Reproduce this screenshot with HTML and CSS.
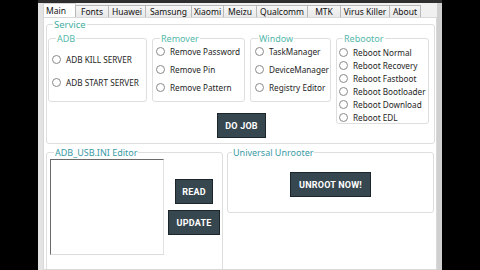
FILE: index.html
```html
<!DOCTYPE html>
<html>
<head>
<meta charset="utf-8">
<link rel="stylesheet" href="styles.css">
</head>
<body>
<div class="win">
  <div class="titlebar"></div>
  <div class="frame">
    <div class="tabs">
      <div class="tab sel w33">Main</div>
      <div class="tab w34">Fonts</div>
      <div class="tab w38">Huawei</div>
      <div class="tab w47">Samsung</div>
      <div class="tab w33">Xiaomi</div>
      <div class="tab w34">Meizu</div>
      <div class="tab w52">Qualcomm</div>
      <div class="tab w34">MTK</div>
      <div class="tab w50">Virus Killer</div>
      <div class="tab w32">About</div>
    </div>
    <div class="page">
      <fieldset class="grp service">
        <legend>Service</legend>
        <div class="svc">
          <div class="svc-left">
            <fieldset class="grp adb">
              <legend>ADB</legend>
              <div class="radios r-adb">
                <label class="radio"><span class="dot"></span>ADB KILL SERVER</label>
                <label class="radio"><span class="dot"></span>ADB START SERVER</label>
              </div>
            </fieldset>
            <fieldset class="grp adb">
              <legend>Remover</legend>
              <div class="radios r-three">
                <label class="radio"><span class="dot"></span>Remove Password</label>
                <label class="radio"><span class="dot"></span>Remove Pin</label>
                <label class="radio"><span class="dot"></span>Remove Pattern</label>
              </div>
            </fieldset>
            <fieldset class="grp adb">
              <legend>Window</legend>
              <div class="radios r-three r-win">
                <label class="radio"><span class="dot"></span>TaskManager</label>
                <label class="radio"><span class="dot"></span>DeviceManager</label>
                <label class="radio"><span class="dot"></span>Registry Editor</label>
              </div>
            </fieldset>
            <button class="btn dojob">DO JOB</button>
          </div>
          <fieldset class="grp reboot">
            <legend>Rebootor</legend>
            <div class="radios r-reboot">
              <label class="radio"><span class="dot"></span>Reboot Normal</label>
              <label class="radio"><span class="dot"></span>Reboot Recovery</label>
              <label class="radio"><span class="dot"></span>Reboot Fastboot</label>
              <label class="radio"><span class="dot"></span>Reboot Bootloader</label>
              <label class="radio"><span class="dot"></span>Reboot Download</label>
              <label class="radio"><span class="dot"></span>Reboot EDL</label>
            </div>
          </fieldset>
        </div>
      </fieldset>
      <div class="bottom">
        <fieldset class="grp editor">
          <legend class="blue">ADB_USB.INI Editor</legend>
          <div class="ed-body">
            <div class="textbox"></div>
            <div class="ed-btns">
              <button class="btn read">READ</button>
              <button class="btn update">UPDATE</button>
            </div>
          </div>
        </fieldset>
        <fieldset class="grp unroot">
          <legend class="blue">Universal Unrooter</legend>
          <div class="un-body">
            <button class="btn unbtn">UNROOT NOW!</button>
          </div>
        </fieldset>
      </div>
    </div>
  </div>
</div>
</body>
</html>
```

FILE: styles.css
```css
* { box-sizing: border-box; }
html, body { margin: 0; padding: 0; }
body {
  background: #000;
  width: 480px;
  height: 270px;
  overflow: hidden;
  font-family: "Noto Sans", "Open Sans", sans-serif;
  color: #222;
}
.win {
  margin-left: 38px;
  width: 404px;
  height: 270px;
  display: flex;
  flex-direction: column;
}
.titlebar {
  height: 3px;
  background: #2e2e2e;
}
.frame {
  flex: 1;
  background: #f0f0f0;
  border-left: 5px solid #e4e4e4;
  border-right: 5px solid #d0d0d0;
  display: flex;
  flex-direction: column;
  min-height: 0;
}
.tabs {
  height: 14px;
  display: flex;
  align-items: flex-end;
}
.tab {
  height: 12px;
  border: 1px solid #b9b9b9;
  border-bottom: none;
  margin-left: -1px;
  background: linear-gradient(#f6f6f6, #e9e9e9);
  font-size: 8.5px;
  line-height: 11px;
  text-align: center;
  white-space: nowrap;
  color: #111;
}
.tab.sel {
  height: 14px;
  margin-left: 0;
  background: #fff;
  border-color: #d6d6d6;
  text-align: left;
  padding-left: 2px;
  line-height: 13px;
}
.w32 { width: 32px; } .w33 { width: 33px; } .w34 { width: 34px; }
.w38 { width: 38px; } .w47 { width: 47px; } .w50 { width: 50px; }
.w52 { width: 52px; }
.page {
  flex: 1;
  background: #fff;
  border: 1px solid #d9d9d9;
  padding: 1px 1px 0 2px;
  overflow: hidden;
  min-height: 0;
}
.grp {
  margin: 0;
  border: 1px solid #dedede;
  border-radius: 3px;
  min-width: 0;
}
.grp legend {
  padding: 0 1px;
  margin-left: 4px;
  font-size: 9px;
  line-height: 11px;
  color: #55b8aa;
}
.grp legend.blue { color: #3a9aa6; }
.service {
  height: 125px;
  padding: 3px 1px 0 1px;
}
.service > legend { font-size: 9.5px; margin-left: 5px; color: #45ad9f; }
.svc {
  display: flex;
  gap: 5px;
}
.svc-left {
  display: grid;
  grid-template-columns: 99px 93px 81px;
  column-gap: 5px;
  align-items: start;
}
.adb {
  height: 69px;
  padding: 0 0 0 3px;
}
.reboot {
  width: 93px;
  height: 91px;
  padding: 0 0 0 2px;
}
.radios {
  display: flex;
  flex-direction: column;
}
.r-adb { padding-top: 10px; gap: 12px; }
.r-three { padding-top: 2px; gap: 7px; }
.r-win { padding-left: 1px; }
.r-reboot { padding-top: 3px; gap: 2px; }
.radio {
  display: flex;
  align-items: center;
  gap: 5px;
  height: 11px;
  font-size: 8.2px;
  white-space: nowrap;
  color: #1e1e1e;
}
.dot {
  width: 9px;
  height: 9px;
  border-radius: 50%;
  border: 1px solid #8a8a8a;
  background: #fff;
  flex: none;
}
.btn {
  background: #37474f;
  border: 1px solid #1c2529;
  color: #fff;
  font-family: Roboto, "Liberation Sans", sans-serif;
  font-weight: bold;
  font-size: 9px;
  letter-spacing: 0.2px;
  padding: 0;
  height: 25px;
}
.dojob {
  grid-column: 2 / 4;
  justify-self: center;
  width: 49px;
  margin-top: 11px;
}
.bottom {
  display: flex;
  gap: 4px;
  margin-top: 3px;
  padding-right: 1px;
}
.editor {
  width: 177px;
  height: 130px;
  padding: 1px 0 0 3px;
}
.ed-body {
  display: flex;
}
.textbox {
  width: 114px;
  height: 96px;
  background: #fff;
  border-top: 1px solid #6a6a6a;
  border-left: 1px solid #6a6a6a;
  border-right: 1px solid #e2e2e2;
  border-bottom: 1px solid #dcdcdc;
}
.ed-btns {
  flex: 1;
  display: flex;
  flex-direction: column;
  align-items: center;
  gap: 6px;
  padding-top: 20px;
  padding-left: 2px;
}
.read { width: 38px; }
.update { width: 52px; }
.unroot {
  flex: 1;
  height: 66px;
  padding: 14px 0 0 0;
}
.un-body {
  display: flex;
  justify-content: center;
}
.unbtn { width: 81px; }
```
